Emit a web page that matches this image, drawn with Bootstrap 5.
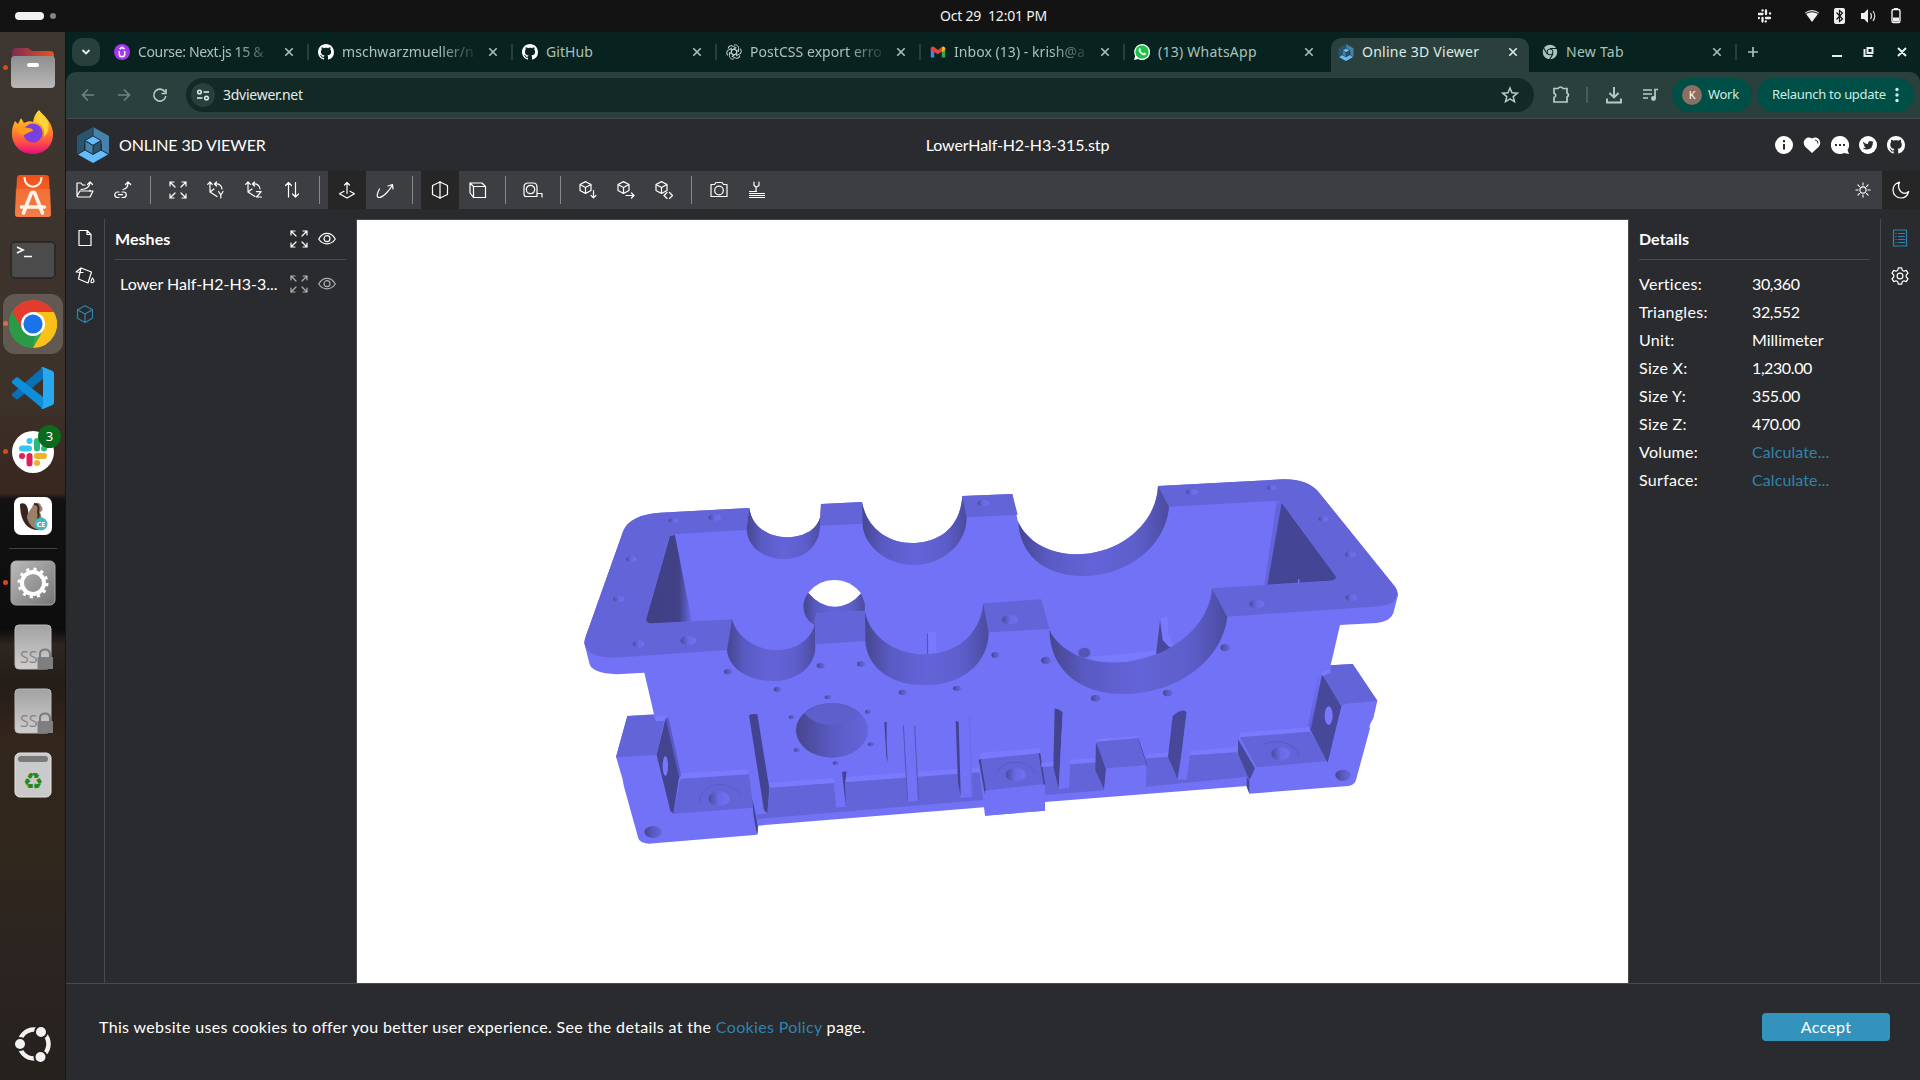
<!DOCTYPE html>
<html lang="en">
<head>
<meta charset="utf-8">
<title>Online 3D Viewer</title>
<meta name="viewport" content="width=device-width, initial-scale=1">
<link href="https://cdn.jsdelivr.net/npm/bootstrap@5.3.0/dist/css/bootstrap.min.css" rel="stylesheet">
<style>
body{--bs-border-color:#4a4a4c;width:1920px;height:1080px;overflow:hidden;background:#131313;font-family:"Noto Sans",sans-serif;color:#fff}
svg{display:block;flex:none}
.ln{fill:none;stroke:currentColor;stroke-width:1.2;stroke-linejoin:round;stroke-linecap:round}
.topbar{height:32px;background:#131313;font-size:14px;padding:0 14px 0 15px}
.topbar .clock{letter-spacing:-.2px;color:#f2f2f2;white-space:pre;padding-left:14px;line-height:30px}
.pill{width:29px;height:8px;border-radius:4px;background:#f2f2f2}
.dot{width:6px;height:6px;border-radius:3px;background:#858585;margin-left:6px}
.dock{width:66px;border-right:1px solid #161414;background:linear-gradient(#3d3631 0,#3d322a 35%,#3a2922 41%,#38281f 44%,#121111 44.6%,#0d0d0d 57%,#2e2621 58.5%,#241c18 62%,#33251c 67%,#30271c 78%,#2c2421 88%,#25211d 100%)}
.slot{width:66px;height:64px;display:flex;align-items:center;justify-content:center;position:relative}
.slot.run::before{content:"";position:absolute;left:3px;top:29px;width:5px;height:5px;border-radius:50%;background:#d84a18}
.slot.cur::after{content:"";position:absolute;left:3px;top:2px;width:60px;height:60px;border-radius:12px;background:rgba(255,255,255,.19)}
.slot.cur svg{z-index:1}
.dsep{width:48px;height:1px;background:#444;margin:0 9px}
.tabs{height:40px;background:#08231f;padding-left:6px;color:#a9c2bc;font-size:14px}
.tsearch{width:28px;height:28px;border-radius:10px;background:#27403b;color:#e3f1ed;margin-right:4px}
.btab{width:204px;height:40px;padding-left:10px;position:relative;letter-spacing:.05px}
.btab::after{content:"";position:absolute;right:-1px;top:12px;width:2px;height:16px;background:#27403b}
.btab .lbl{width:146px;margin-left:8px;white-space:nowrap;line-height:20px}
.btab .tight{letter-spacing:-.35px}
.btab .wide{letter-spacing:.25px}
.btab .fade-out{-webkit-mask-image:linear-gradient(90deg,#000 98px,transparent 138px)}
.btab.on{color:#dcebe7}
.btab.on::before{content:"";position:absolute;left:3px;top:6px;width:198px;height:34px;background:#2a403c;border-radius:10px 10px 0 0}
.btab.on>*{position:relative}
.btab.on::after,.btab.nosep::after{display:none}
.addr{height:47px;background:#2a403c;border-bottom:1px solid #434c4a;color:#b6cdc7;border-radius:10px 10px 0 0}
.bw{background:#08231f}
.omni{width:1348px;height:34px;border-radius:17px;background:#122925;margin-left:14px;color:#e3eeeb;font-size:14px;padding:0 15px 0 5px}
.siteic{width:24px;height:24px;border-radius:12px;background:#27403b}
.url{margin-left:8px;letter-spacing:-.25px;padding-bottom:2px}
.chip{height:34px;border-radius:17px;background:#004f47;color:#c9eee5;font-size:13px;letter-spacing:-.3px}
.ava{width:20px;height:20px;border-radius:10px;background:#8d6e63;color:#fff;font-size:11px;margin-right:6px}
.viewer{background:#2a2b2e;font-family:Lato,sans-serif;font-size:16px}
.vhead{height:52px;padding:0 15px 0 11px}
.vtitle{font-size:16px;letter-spacing:-.12px;width:300px}
.fname{letter-spacing:-.12px;margin-left:53px}
.vtools{height:38px;background:#3d3e42}
.tb{width:38px;height:38px;display:flex;align-items:center;justify-content:center}
.tb.sel{background:#262626}
.tsep{width:1px;height:28px;background:#888;margin:0 8px}
.vmain{height:774px;padding-top:10px}
.strip{width:39px}
.strip div{height:38px;display:flex;align-items:center;justify-content:center}
.pane{width:251px;padding:0 10px}
.ptitle{height:41px;border-bottom:1px solid #4a4a4c;font-weight:700;letter-spacing:.05px}
.canvas3d{width:1273px;background:#fff}
.lnk{color:#2f84ad}
.prow{height:28px;line-height:28px}
.prow span:first-child{width:113px;letter-spacing:.3px}
.prow .num{letter-spacing:-.4px}
.prow .lnk{letter-spacing:.1px}
.cookie{height:97px;border-top:1px solid #4a4a4c;padding:0 30px 10px 33px}
.cookie div{letter-spacing:.345px}
.accept{width:128px;height:28px;border-radius:4px;background:#3393bd;color:#fff;border:0;padding:0;font-size:16px;line-height:28px;letter-spacing:.3px}
</style>
<script src="https://cdn.jsdelivr.net/npm/bootstrap@5.3.0/dist/js/bootstrap.bundle.min.js"></script>
</head>
<body class="d-flex flex-column">
<svg width="0" height="0" class="position-absolute">
<defs>
<symbol id="x" viewBox="0 0 10 10"><path d="M1.300 1.300l7.400 7.400M8.700 1.300L1.300 8.700" stroke="currentColor" stroke-width="1.600" fill="none"/></symbol>
<symbol id="gh" viewBox="0 0 16 16"><path fill="currentColor" d="M8 0C3.58 0 0 3.58 0 8c0 3.54 2.29 6.53 5.47 7.59.4.07.55-.17.55-.38 0-.19-.01-.82-.01-1.49-2.01.37-2.53-.49-2.69-.94-.09-.23-.48-.94-.82-1.13-.28-.15-.68-.52-.01-.53.63-.01 1.08.58 1.23.82.72 1.21 1.87.87 2.33.66.07-.52.28-.87.51-1.07-1.78-.2-3.64-.89-3.64-3.95 0-.87.31-1.59.82-2.15-.08-.2-.36-1.02.08-2.12 0 0 .67-.21 2.2.82.64-.18 1.32-.27 2-.27s1.36.09 2 .27c1.53-1.04 2.2-.82 2.2-.82.44 1.1.16 1.92.08 2.12.51.56.82 1.27.82 2.15 0 3.07-1.87 3.75-3.65 3.95.29.25.54.73.54 1.48 0 1.07-.01 1.93-.01 2.2 0 .21.15.46.55.38A8.01 8.01 0 0 0 16 8c0-4.42-3.58-8-8-8z"/></symbol>
<symbol id="logo" viewBox="0 0 32 36"><path d="M16 0v12L7 17v9L0 27V9z" fill="#2a5470"/><path d="M16 0v12l9 5v9l7 1V9z" fill="#4583ac"/><path d="M16 36L1 27.500l7-4.500 8 4.500 8-4.500 7 4.500z" fill="#63bdfc"/><path d="M16 9l7.500 4.500L16 18l-7.500-4.500z" fill="#63bdfc"/><path d="M8 14l8 4.500V27l-8-4z" fill="#4583ac"/><path d="M24 14l-8 4.500V27l8-4z" fill="#2a5470"/><path d="M16 0v9M8 13.500l8 5 8-5M16 18.500V27M8 13.500V23l8 4.500 8-4.500v-9.500L16 9zM0 27.500L8 23M32 27.500L24 23" fill="none" stroke="#22303a" stroke-width="1"/></symbol>
<symbol id="fit" viewBox="0 0 18 18"><path class="ln" d="M1 5V1h4M1 1l5 5M13 1h4v4M17 1l-5 5M1 13v4h4M1 17l5-5M13 17h4v-4M17 17l-5-5"/></symbol>
<symbol id="eye" viewBox="0 0 18 18"><path class="ln" d="M.7 9C5 1.500 13 1.500 17.300 9 13 15.500 5 15.500.7 9z"/><circle class="ln" cx="9" cy="8.700" r="3"/></symbol>
<symbol id="cube" viewBox="0 0 18 18"><path class="ln" d="M9 .7l7.500 4v8.500L9 17.400l-7.500-4.200V4.700zM1.500 4.700L9 9l7.500-4.300M9 9v8.400"/></symbol>
<symbol id="cubes" viewBox="0 0 18 18"><path class="ln" d="M6.500.6L12 3.500v6L6.500 12.500 1 9.500v-6zM1 3.500l5.500 3L12 3.500M6.500 6.500v6"/></symbol>
<symbol id="axes" viewBox="0 0 18 18"><path class="ln" d="M3 11V1M.7 3.300L3 1l2.300 2.300M3 11l7 4.500M3 11l4-3M9.500 1L7.500 3l2 2M7.700 3C12 2.500 14.500 4 15 8"/></symbol>
<linearGradient id="cy"><stop offset="0" stop-color="#46468f"/><stop offset=".2" stop-color="#5a5ac3"/><stop offset=".5" stop-color="#6464d9"/><stop offset=".8" stop-color="#5d5dca"/><stop offset="1" stop-color="#4b4b9f"/></linearGradient>
<linearGradient id="bo"><stop offset="0" stop-color="#46468f"/><stop offset=".5" stop-color="#5a5ac3"/><stop offset="1" stop-color="#6565dc"/></linearGradient>
<linearGradient id="hl"><stop offset="0" stop-color="#4a4a9d"/><stop offset=".5" stop-color="#6a6ae6"/><stop offset="1" stop-color="#7070f3"/></linearGradient>
<linearGradient id="hr"><stop offset="0" stop-color="#5858bd"/><stop offset="1" stop-color="#7272f7"/></linearGradient>
<linearGradient id="dl"><stop offset="0" stop-color="#404085"/><stop offset=".72" stop-color="#414188"/><stop offset="1" stop-color="#6a6ae6"/></linearGradient>
<linearGradient id="gry" x2="1" y2="1"><stop offset="0" stop-color="#bbb"/><stop offset="1" stop-color="#767676"/></linearGradient>
<linearGradient id="gv" x2="0" y2="1"><stop offset="0" stop-color="#a2a2a2"/><stop offset="1" stop-color="#cfcfcf"/></linearGradient>
<linearGradient id="gd" x2="0" y2="1"><stop offset="0" stop-color="#8f8f8f"/><stop offset="1" stop-color="#b8b8b8"/></linearGradient>
<linearGradient id="ff" x2="0" y2="1"><stop offset="0" stop-color="#ffe03b"/><stop offset=".4" stop-color="#ff9a1f"/><stop offset=".75" stop-color="#ff4a49"/><stop offset="1" stop-color="#e10b82"/></linearGradient>
<linearGradient id="fo"><stop offset="0" stop-color="#7c2b55"/><stop offset="1" stop-color="#e8551f"/></linearGradient>
<linearGradient id="or" x2="0" y2="1"><stop offset="0" stop-color="#f04f17"/><stop offset="1" stop-color="#f5824a"/></linearGradient>
</defs></svg>

<header class="topbar d-flex align-items-center justify-content-between">
  <div class="d-flex align-items-center" style="width:200px"><div class="pill"></div><div class="dot"></div></div>
  <div class="clock">Oct 29  12:01 PM</div>
  <svg width="148" height="18" viewBox="1758 7 148 18" fill="#f0f0f0"><g fill="none" stroke="#f0f0f0" stroke-width="2.300" stroke-linecap="round"><path d="M1758.500 14h4M1762.500 10.500h.1M1766 10.500v3.500M1770 13.500h.1M1766 18h4M1765.700 21.500h.1M1762.500 18v3.500M1758.800 18h.1"/></g>
  <path d="M1805 12.500Q1812 7.500 1819 12.500L1812 22z"/><path d="M1806 13.500q6-3.500 12 0" stroke="#131313" fill="none" stroke-width="1"/>
  <rect x="1834" y="8" width="11" height="16" rx="2"/><path d="M1836.500 12.500l6 6.500-3 2.500v-11l3 2.500-6 6.500" stroke="#131313" fill="none" stroke-width="1.200"/>
  <path d="M1861 13h3l4-4v14l-4-4h-3z"/><path d="M1870.500 13q2 3 0 6M1873 11q3.500 5 0 10" stroke="#ddd" fill="none" stroke-width="1.200"/>
  <path d="M1892 11q0-1.500 1.500-1.500h5q1.500 0 1.500 1.500v10q0 1.500-1.500 1.500h-5q-1.500 0-1.500-1.500z" fill="none" stroke="#f0f0f0" stroke-width="1.400"/><path d="M1894 8h4v2h-4zM1893 17.500h6v4h-6z"/></svg>
</header>

<div class="d-flex flex-grow-1">
<nav class="dock d-flex flex-column pt-1">
  <div class="slot run"><svg width="46" height="42" viewBox="0 0 46 42"><path d="M2 5q0-4 4-4h12l4 3h18q4 0 4 4v8H2z" fill="url(#fo)"/><rect x="1" y="9" width="44" height="32" rx="4" fill="url(#gd)"/><rect x="17" y="16" width="12" height="4" rx="2" fill="#fff"/></svg></div>
  <div class="slot"><svg width="44" height="46" viewBox="0 0 44 46"><path d="M28 1c3 5 12 9 14 22C43 36 34 45 22 45S0 36 1 23c0-5 2-8 3-11l3 3 3-6 3 5c4-2 7-2 9-1 1-6 3-9 6-12z" fill="url(#ff)"/><circle cx="22" cy="24" r="9.500" fill="#7a3fe0"/><path d="M6 19c5-2 9 0 11 0 3 0 5 1 5 3-5 1-6 3-9 4-5-1-6-4-7-7z" fill="#ff9a1f"/><path d="M24 13c8 1 10 8 9 15 6-5 7-16-3-24-3 3-6 5-6 9z" fill="#ffd43b"/></svg></div>
  <div class="slot"><svg width="38" height="44" viewBox="0 0 38 44"><path d="M3 4q0-3 3-3h26q3 0 3 3l2 36q0 3-3 3H4q-3 0-3-3z" fill="url(#or)"/><path d="M1.800 15h34.400L37 40q0 3-3 3H4q-3 0-3-3z" fill="#f47a45" opacity=".55"/><path d="M10.500 3c0 13 17 13 17 0" fill="none" stroke="#fff3ea" stroke-width="2"/><path d="M9.500 39L17.500 18.500h3L28.500 39M7.500 33h23" fill="none" stroke="#fff3ea" stroke-width="3.600" stroke-linecap="round" stroke-linejoin="bevel"/></svg></div>
  <div class="slot"><svg width="46" height="38" viewBox="0 0 46 38"><rect x="1" y="1" width="44" height="36" rx="4" fill="#4b4b4b" stroke="#252525" stroke-width="1.500"/><path d="M7 6l6 3-6 3M14 15.500h8" stroke="#fff" stroke-width="1.700" fill="none"/></svg></div>
  <div class="slot run cur"><svg width="48" height="48" viewBox="0 0 48 48"><circle cx="24" cy="24" r="24" fill="#34a853"/><path d="M3.200 12A24 24 0 0 1 44.800 12H24L13.600 30z" fill="#e33b2e"/><path d="M44.800 12A24 24 0 0 1 24 48L34.400 30 34 12z" fill="#fbc116"/><path d="M3.200 12L13.600 30l12 5L24 48A24 24 0 0 1 3.200 12z" fill="#2a9a48"/><path d="M24 12h12v12z" fill="#fbc116"/><circle cx="24" cy="24" r="12" fill="#fff"/><circle cx="24" cy="24" r="9.600" fill="#1a73e8"/></svg></div>
  <div class="slot"><svg width="44" height="44" viewBox="0 0 44 44"><path d="M32 1L1 28l0 2 4 3q1 .5 2 0L32 13z" fill="#0a6fb5"/><path d="M1 15l4-3.500q1-.5 2 0L32 31v12L1 17z" fill="#0e8fdc"/><path d="M32 1l9.500 4Q43 6 43 7.500v29q0 1.500-1.500 2.500L32 43q-1 0-2-1 2 0 2-3V5q0-3-2-3 1-1 2-1z" fill="#27a9f2"/></svg></div>
  <div class="slot run"><svg width="50" height="54" viewBox="0 0 50 54" overflow="visible"><circle cx="25" cy="27" r="21" fill="#fff"/><g stroke-width="6" stroke-linecap="round" fill="none"><path d="M14 23.500h7M21.500 16h.1" stroke="#36c5f0"/><path d="M29 16v7.500M36 23.500h.1" stroke="#2eb67d"/><path d="M29 31h7M29 38h.1" stroke="#ecb22e"/><path d="M21.500 31v7.500M14 31h.1" stroke="#e01e5a"/></g><circle cx="41.500" cy="11.500" r="11.500" fill="#0a6b1c"/><text x="41.500" y="16" font-size="13" text-anchor="middle" fill="#fff">3</text></svg></div>
  <div class="slot"><svg width="40" height="40" viewBox="0 0 40 40"><rect x="1" y="1" width="38" height="38" rx="7" fill="#fff"/><path d="M7 8c6-3 9 4 8 11 0 6 3 10 8 12l4 3C14 35 7 25 7 8z" fill="#382520"/><path d="M14 22c0-6 5-9 6-13 3-4 8-2 8 1 3 2 1 6-1 6 2 5 3 12-1 17-5 1-10-4-12-11z" fill="#9b7f69"/><path d="M21 8c5 0 5 4 4 8 2 5-1 10-2 12" stroke="#382520" stroke-width="2" fill="none"/><circle cx="28" cy="28" r="6.500" fill="#46b5bd"/><text x="28" y="31" font-size="7" font-weight="700" text-anchor="middle" fill="#fff">CE</text></svg></div>
  <div class="dsep"></div>
  <div class="slot run" style="margin-top:2px"><svg width="46" height="46" viewBox="0 0 46 46"><rect x="1" y="1" width="44" height="44" rx="5" fill="url(#gry)" stroke="#aaa"/><circle cx="23" cy="23" r="11" fill="none" stroke="#fff" stroke-width="4"/><circle cx="23" cy="23" r="13.700" fill="none" stroke="#fff" stroke-width="3.500" stroke-dasharray="3.100 4.070"/></svg></div>
  <div class="slot"><svg width="40" height="46" viewBox="0 0 40 46"><rect x="2" y="1" width="36" height="44" rx="4" fill="url(#gv)" stroke="#bbb"/><text x="7" y="39" font-size="16" fill="#858585" font-family="Open Sans,sans-serif">SS</text><path d="M27 34v-4q0-4.500 5-4.500t5 4.500v4" fill="none" stroke="#7c7c7c" stroke-width="2"/><path d="M24.500 33H40v12H24.500z" fill="#7f7f7f"/></svg></div>
  <div class="slot"><svg width="40" height="46" viewBox="0 0 40 46"><rect x="2" y="1" width="36" height="44" rx="4" fill="url(#gv)" stroke="#bbb"/><text x="7" y="39" font-size="16" fill="#858585" font-family="Open Sans,sans-serif">SS</text><path d="M27 34v-4q0-4.500 5-4.500t5 4.500v4" fill="none" stroke="#7c7c7c" stroke-width="2"/><path d="M24.500 33H40v12H24.500z" fill="#7f7f7f"/></svg></div>
  <div class="slot"><svg width="38" height="46" viewBox="0 0 38 46"><rect x="1" y="1" width="36" height="44" rx="5" fill="#cacaca" stroke="#e5e5e5"/><rect x="4" y="4" width="30" height="6" rx="3" fill="#7a7a7a"/><text x="19" y="37" font-size="23" text-anchor="middle" fill="#26891c" font-family="DejaVu Sans,sans-serif">♻</text></svg></div>
  <div class="slot mt-auto mb-1"><svg width="38" height="38" viewBox="0 0 38 38"><circle cx="20" cy="19" r="14.500" fill="none" stroke="#f2f2f2" stroke-width="4.500"/><g fill="#f2f2f2" stroke="#25211d" stroke-width="2"><circle cx="6" cy="19" r="6"/><circle cx="27" cy="7" r="6"/><circle cx="26.500" cy="32" r="6"/></g></svg></div>
</nav>

<main class="flex-grow-1 d-flex flex-column bw">
  <div class="tabs d-flex align-items-center">
    <div class="tsearch d-flex align-items-center justify-content-center"><svg width="10" height="8" viewBox="0 0 10 8"><path d="M1.500 2L5 5.500 8.500 2" stroke="currentColor" stroke-width="1.800" fill="none"/></svg></div>
    <div class="btab d-flex align-items-center"><svg width="16" height="16" viewBox="0 0 16 16"><circle cx="8" cy="8" r="8" fill="#a435f0"/><path d="M5.300 7v3.200q0 2.500 2.700 2.500t2.700-2.500V7M5.500 5L8 3.300 10.500 5" fill="none" stroke="#fff" stroke-width="1.600"/></svg><div class="lbl fade-out tight">Course: Next.js 15 &amp;</div><svg width="10" height="10"><use href="#x"/></svg></div>
    <div class="btab d-flex align-items-center"><svg width="16" height="16" color="#fff"><use href="#gh"/></svg><div class="lbl fade-out">mschwarzmueller/n</div><svg width="10" height="10"><use href="#x"/></svg></div>
    <div class="btab d-flex align-items-center"><svg width="16" height="16" color="#fff"><use href="#gh"/></svg><div class="lbl">GitHub</div><svg width="10" height="10"><use href="#x"/></svg></div>
    <div class="btab d-flex align-items-center"><svg width="16" height="16" viewBox="0 0 16 16"><g fill="none" stroke="#c8d4d1" stroke-width="1"><path id="pt" d="M8 1.200c2-1 4.800.5 4.500 3.300v3L8 5 5 6.700"/><use href="#pt" transform="rotate(60 8 8)"/><use href="#pt" transform="rotate(120 8 8)"/><use href="#pt" transform="rotate(180 8 8)"/><use href="#pt" transform="rotate(240 8 8)"/><use href="#pt" transform="rotate(300 8 8)"/></g></svg><div class="lbl fade-out">PostCSS export erro</div><svg width="10" height="10"><use href="#x"/></svg></div>
    <div class="btab d-flex align-items-center"><svg width="16" height="16" viewBox="0 0 16 16"><path d="M.8 4v9.500h3.400V6z" fill="#4285f4"/><path d="M15.200 4v9.500h-3.400V6z" fill="#34a853"/><path d="M.8 6.200V4Q2 1.500 4.200 3L8 6l3.800-3v4.500L8 10.300z" fill="#ea4335"/><path d="M11.800 3q2.400-1.500 3.400 1v2l-3.400 2.300z" fill="#fbbc04"/></svg><div class="lbl fade-out">Inbox (13) - krish@a</div><svg width="10" height="10"><use href="#x"/></svg></div>
    <div class="btab nosep d-flex align-items-center"><svg width="16" height="16" viewBox="0 0 16 16"><path d="M0 16l1.200-4A8 8 0 1 1 4.200 15z" fill="#fff"/><circle cx="8" cy="8" r="6.700" fill="#1fc14b"/><path d="M5 4.500q1-1 1.500.2l.4 1-.6.900Q7.300 8.700 9.300 9.500l.9-.9 1.500.7q.6.400-.2 1.400-1 1-2.800.3Q5.500 9.700 4.600 6.500q-.2-1.200.4-2z" fill="#fff"/></svg><div class="lbl wide">(13) WhatsApp</div><svg width="10" height="10"><use href="#x"/></svg></div>
    <div class="btab on d-flex align-items-center"><svg width="16" height="17"><use href="#logo"/></svg><div class="lbl wide">Online 3D Viewer</div><svg width="10" height="10"><use href="#x"/></svg></div>
    <div class="btab d-flex align-items-center"><svg width="16" height="16" viewBox="0 0 16 16"><circle cx="8" cy="8" r="5.300" fill="none" stroke="#a9c2bc" stroke-width="4"/><path d="M8 4.500h7.500M5 9.800L1.200 3.300M11 9.800L7.300 16" stroke="#08231f" stroke-width="1.100"/><circle cx="8" cy="8" r="2.400" fill="#a9c2bc"/></svg><div class="lbl wide">New Tab</div><svg width="10" height="10"><use href="#x"/></svg></div>
    <svg class="ms-auto" width="182" height="20" viewBox="1738 42 182 20" stroke="currentColor" fill="none" stroke-width="1.700"><path d="M1753 47v10M1748 52h10"/><g stroke="#e4efec" stroke-width="2"><path d="M1832 56h10M1867.500 48h5v5h-5zM1864.500 49v7h8M1898 48l8 8M1906 48l-8 8"/></g></svg>
  </div>
  <div class="addr d-flex align-items-center">
    <svg style="margin-left:14px" width="92" height="20" viewBox="80 85 92 20" fill="none" stroke="currentColor" stroke-width="1.600"><path d="M94 95H83M88 89.500L82.500 95l5.500 5.500M118 95h11M124 89.500l5.500 5.500-5.500 5.500" stroke="#6d8580"/><path d="M165 92a6 6 0 1 0 .8 4M166 89v4.500h-4.500"/></svg>
    <div class="omni d-flex align-items-center"><div class="siteic d-flex align-items-center justify-content-center"><svg width="14" height="14" viewBox="0 0 14 14" fill="none" stroke="currentColor" stroke-width="1.500"><circle cx="3.500" cy="4" r="1.800"/><circle cx="10.500" cy="10" r="1.800"/><path d="M7.500 4H13M1 10h5.500"/></svg></div><span class="url">3dviewer.net</span>
      <svg class="ms-auto" width="18" height="18" viewBox="0 0 18 18"><path d="M9 2l2 4.800 5.200.4-4 3.400 1.300 5L9 12.900l-4.500 2.700 1.300-5-4-3.400 5.200-.4z" fill="none" stroke="#b6cdc7" stroke-width="1.500"/></svg></div>
    <svg width="138" height="24" viewBox="1534 83 138 24" fill="none" stroke="currentColor" stroke-width="1.700"><path d="M1554 88.500h4q2.500-3 5 0h4v4.500q3 2 0 4v5h-13v-4.500q3.500-2 0-4.500z"/><path d="M1587 87v16" stroke="#4a625d"/><path d="M1614 87v10M1609.500 93l4.500 4.500 4.500-4.500M1607 98.500v4h14v-4" stroke-width="1.900"/><path d="M1643 90h9M1643 94h9M1643 98h5M1655 99v-9.500h3"/><circle cx="1653.500" cy="98.500" r="1.600" fill="currentColor"/></svg>
    <div class="chip d-flex align-items-center" style="width:80px;padding-left:10px"><div class="ava d-flex align-items-center justify-content-center">K</div>Work</div>
    <div class="chip d-flex align-items-center" style="width:157px;margin-left:5px;padding-left:15px"><span>Relaunch to update</span><svg class="ms-auto" width="4" height="16" viewBox="0 0 4 16" style="margin-right:15px" fill="currentColor"><circle cx="2" cy="2.500" r="1.700"/><circle cx="2" cy="8" r="1.700"/><circle cx="2" cy="13.500" r="1.700"/></svg></div>
  </div>

  <section class="viewer flex-grow-1 d-flex flex-column">
    <div class="vhead d-flex align-items-center justify-content-between">
      <div class="vtitle d-flex align-items-center"><svg width="32" height="36" style="margin-right:10px"><use href="#logo"/></svg>ONLINE 3D VIEWER</div>
      <div class="fname">LowerHalf-H2-H3-315.stp</div>
      <div class="d-flex justify-content-end" style="width:300px;gap:10px">
        <svg width="18" height="18" viewBox="0 0 18 18"><circle cx="9" cy="9" r="9" fill="#fff"/><path d="M9 4v2.200M9 8v5.500" stroke="#2a2b2e" stroke-width="2"/></svg>
        <svg width="18" height="18" viewBox="0 0 18 18"><path d="M9 17L2 10.500C-1.500 6 3-1 9 2.500 15-1 19.500 6 16 10.500z" fill="#fff"/><path d="M12 4q3 0 3 3.500" stroke="#2a2b2e" fill="none"/></svg>
        <svg width="18" height="18" viewBox="0 0 18 18"><path d="M9 0a9 9 0 0 1 7.500 14L18 18l-5-1A9 9 0 1 1 9 0z" fill="#fff"/><path d="M4 9h2M8 9h2M12 9h2" stroke="#2a2b2e" stroke-width="2"/></svg>
        <svg width="18" height="18" viewBox="0 0 18 18"><circle cx="9" cy="9" r="9" fill="#fff"/><path d="M4 5.500q2 2.500 5 2.500 0-3 2.500-3 1.200 0 1.800.7l1.500-.4-1 1.500Q14 13 8 13.500q-2.500 0-4.200-1.200 2 0 3-1-1.800-.6-2-2h1Q4 8 4 5.500z" fill="#2a2b2e"/></svg>
        <svg width="18" height="18" color="#fff"><use href="#gh"/></svg>
      </div>
    </div>
    <div class="vtools d-flex align-items-center">
      <div class="tb"><svg width="18" height="18" viewBox="0 0 18 18"><path class="ln" d="M1 15V2h4l1.500 2H9M14 9v1.500M1 15l3-5h13l-3 6H2zM5 8.500c5 0 8.500-2 9-7M11.500 3.500L14 1l2.500 2.500"/></svg></div>
      <div class="tb"><svg width="18" height="18" viewBox="0 0 18 18"><path class="ln" d="M5 11H3.500a2.700 2.700 0 0 0 0 5.500H5M8 11h1.500a2.700 2.700 0 0 1 0 5.500H8M4.500 13.700h4M9 8.500c3.500-.5 5-3 5-7M11.500 3.500L14 1l2.700 2.500"/></svg></div>
      <div class="tsep"></div>
      <div class="tb"><svg width="18" height="18"><use href="#fit"/></svg></div>
      <div class="tb"><svg width="18" height="18" viewBox="0 0 18 18"><use href="#axes"/><path class="ln" d="M11.500 10.500l2.300 3.300 2.300-3.300M13.800 13.800V17"/></svg></div>
      <div class="tb"><svg width="18" height="18" viewBox="0 0 18 18"><use href="#axes"/><path class="ln" d="M11.500 10.700h4.700L11.500 16h5"/></svg></div>
      <div class="tb"><svg width="18" height="18" viewBox="0 0 18 18"><path class="ln" d="M5.500 16V1.500M2.500 4.500l3-3 3 3M12.500 1.500V16M9.500 13l3 3 3-3"/></svg></div>
      <div class="tsep"></div>
      <div class="tb sel"><svg width="18" height="18" viewBox="0 0 18 18"><path class="ln" d="M9 12.500V1.500M6.500 4L9 1.500 11.500 4M6 10.300L1.500 12.700 9 17l7.500-4.300L12 10.300"/></svg></div>
      <div class="tb"><svg width="18" height="18" viewBox="0 0 18 18"><path class="ln" d="M3.500 8c-3 5-3 8.500-.5 8.500C7 16.500 13 10 16.500 4M12 5l4.500-1.500.5 4.500"/></svg></div>
      <div class="tsep"></div>
      <div class="tb sel"><svg width="18" height="18" viewBox="0 0 18 18"><path class="ln" d="M9 1l7.500 3.500v9L9 17l-7.500-3.500v-9zM9 .5v17"/></svg></div>
      <div class="tb"><svg width="18" height="18" viewBox="0 0 18 18"><path class="ln" d="M4.500 5.500h12v11h-12zM4.500 5.500l-3.500-3.500v10l3.500 4.500M1 2h12l3.500 3.500"/></svg></div>
      <div class="tsep"></div>
      <div class="tb"><svg width="20" height="18" viewBox="0 0 20 18"><path class="ln" d="M3 15.500Q1 15.500 1 13V6q0-4 4-4h5q4 0 4 4v6.500h5V16M3 15.500h11V12"/><circle class="ln" cx="7.500" cy="8.500" r="4.200"/></svg></div>
      <div class="tsep"></div>
      <div class="tb"><svg width="18" height="18" viewBox="0 0 18 18"><use href="#cubes"/><path class="ln" d="M14.500 9.500v7M12 14.300l2.500 2.500 2.500-2.500"/></svg></div>
      <div class="tb"><svg width="18" height="18" viewBox="0 0 18 18"><use href="#cubes"/><path class="ln" d="M9 14.500h8M14.500 12l2.500 2.500-2.500 2.500"/></svg></div>
      <div class="tb"><svg width="18" height="18" viewBox="0 0 18 18"><use href="#cubes"/><path class="ln" d="M12 11.500l-3 3 3 3M14.500 11.500l3 3-3 3"/></svg></div>
      <div class="tsep"></div>
      <div class="tb"><svg width="18" height="18" viewBox="0 0 18 18"><path class="ln" d="M1 3.500h3.500L6 1.500h6l1.500 2H17v12H1z"/><circle class="ln" cx="9" cy="9.500" r="4.300"/></svg></div>
      <div class="tb"><svg width="18" height="18" viewBox="0 0 18 18"><path class="ln" d="M6 1v3.500l2 1.500v4.500M11 1v3.500L8.500 6M1.500 10.500h7M1.500 12.500h15M1.500 14.500h15M1.500 16.500h15" stroke-linecap="butt"/></svg></div>
      <div class="tb ms-auto"><svg width="16" height="16" viewBox="0 0 18 18"><circle class="ln" cx="9" cy="9" r="3.500"/><path class="ln" d="M9 1v2.500M9 14.500V17M1 9h2.500M14.500 9H17M3.300 3.300l1.800 1.800M12.900 12.900l1.800 1.800M3.300 14.700l1.800-1.800M12.900 5.100l1.800-1.800"/></svg></div>
      <div class="tb sel"><svg width="18" height="18" viewBox="0 0 18 18"><path class="ln" stroke-width="1.400" d="M7 1.200C3 2.500 1 5.500 1 9c0 5 4 8 8 8 3.500 0 6.500-2 7.700-6.500-3 2.500-6 2-8 0C6.500 8 6 4.500 7.500 1.200z"/></svg></div>
    </div>
    <div class="vmain d-flex">
      <div class="strip border-end">
        <div><svg width="18" height="18" viewBox="0 0 18 18"><path class="ln" d="M3 1.500h8l4 4v11H3zM11 1.500v4h4"/></svg></div>
        <div><svg width="20" height="18" viewBox="0 0 20 18"><path class="ln" d="M6 1l10.500 4-3.500 11-9.500-4zM6 1L1 5l7 .5M17.500 11q3 4 0 4.500t0-4.500z"/></svg></div>
        <div class="lnk"><svg width="18" height="18"><use href="#cube"/></svg></div>
      </div>
      <div class="pane">
        <div class="ptitle d-flex align-items-center"><span class="me-auto">Meshes</span><svg width="18" height="18"><use href="#fit"/></svg><svg width="18" height="18" style="margin:0 10px"><use href="#eye"/></svg></div>
        <div class="d-flex align-items-center" style="height:28px;margin-top:10px;padding-left:5px"><span class="me-auto">Lower Half-H2-H3-3...</span><svg width="18" height="18" color="#b0b0b0"><use href="#fit"/></svg><svg width="18" height="18" style="margin:0 10px" color="#b0b0b0"><use href="#eye"/></svg></div>
      </div>
      <div class="canvas3d border-start border-top border-end">
<svg width="1271" height="763" viewBox="357 220 1271 763">
<g transform="translate(560 460) scale(.333333)">
<path fill="#7272f7" d="M300 158L568 144C575 200 625 232 682 232 735 232 778 205 783 160V132L906 126C920 205 985 249 1055 249 1130 249 1200 210 1207 108L1357 102 1373 182C1400 245 1470 283 1550 283 1680 283 1790 190 1794 78L2170 58Q2240 57 2275 95L2505 380Q2515 392 2514 405L2500 460Q2490 485 2450 489L2340 495 2312 616 2378 612 2452 722 2440 775Q2425 800 2430 805L2388 960Q2384 975 2365 978L2068 1001 2060 978 1455 1026V1052L1275 1067 1272 1042 595 1097 592 1124 265 1151Q240 1150 235 1135L192 980 187 955 168 890 202 768 282 763 253 638 170 643Q95 640 88 610L73 550Q73 540 78 527L190 212Q210 165 300 158z"/>
<g fill="#6464d9">
<path d="M300 158L568 144 560 210 360 221Q330 223 326 238L258 478Q258 491 285 490L517 478 501 570 160 593Q80 592 73 550 73 540 78 527L190 212Q210 165 300 158z"/>
<path d="M783 132L906 126 908 191 779 197zM1207 108L1357 102 1373 164 1220 172z"/>
<path d="M1794 78L2170 58Q2240 57 2275 95L2505 380Q2520 405 2500 425 2485 437 2440 440L2002 470 1956 385 2310 363Q2330 360 2328 350L2170 132Q2160 122 2140 123L1827 140z"/>
</g>
<path fill="url(#cy)" d="M568 144C575 200 625 232 682 232 735 232 778 205 783 160V132L780 197C780 250 740 297 673 297 610 297 562 260 560 208z"/>
<path fill="url(#cy)" d="M906 126C920 205 985 249 1055 249 1130 249 1200 210 1207 108L1220 173C1220 250 1150 315 1060 315 975 315 908 250 908 192z"/>
<path fill="url(#cy)" d="M1373 182C1400 245 1470 283 1550 283 1680 283 1790 190 1794 78L1827 140C1820 250 1710 348 1570 348 1450 348 1378 280 1375 185z"/>
<path fill="url(#dl)" d="M330 228L345 225 395 484 280 490Q255 490 259 476z"/>
<path fill="#5858bd" d="M2150 126l15 4-43 244-9 0z" opacity=".5"/><path fill="#454595" d="M2165 128L2328 350Q2330 360 2310 362L2122 374z"/>
<path fill="url(#cy)" d="M745 398C722 425 725 475 765 495L768 460 915 452 914 430 903 400z"/>
<path fill="#fff" d="M745 398Q775 360 823 360T903 400Q870 440 825 440T745 398z"/>
<path fill="#7a7afe" d="M1590 590L1790 572V582L1700 606 1600 602z"/><ellipse cx="1573" cy="578" rx="18" ry="15" fill="#5555b5"/>
<path fill="#7a7afe" d="M1803 474q12-8 22-2v52l15 32-30 20z"/><path fill="#48489b" d="M1800 482L1788 584 1815 583 1842 560 1828 562 1808 540z"/>
<path fill="#7979fd" d="M1103 515l25 0v60l-20 8z"/><path fill="#5555b5" d="M1101 520h3v63h-3z"/>
<path fill="#6464d9" d="M768 460L915 452 916 543 768 553zM1270 430L1444 418 1468 507 1286 517z"/>
<path fill="url(#cy)" d="M516 478C530 530 585 570 650 570 710 570 758 535 766 485V560C766 620 710 663 640 663 565 663 505 625 501 570z"/>
<path fill="url(#cy)" d="M915 455C930 530 1005 583 1095 583 1190 583 1262 520 1270 430L1286 517C1286 610 1205 676 1095 676 990 676 920 620 916 543z"/>
<path fill="url(#cy)" d="M1468 510C1500 575 1580 608 1660 608 1820 608 1950 500 1956 385L2002 470C1985 610 1840 702 1690 702 1560 702 1470 630 1468 510z"/>
<ellipse cx="816" cy="811" rx="108" ry="82" fill="url(#bo)"/><path fill="#5e5ecc" d="M733 759Q770 729 816 729T899 759Q870 795 816 795T733 759z"/>
<!-- left foot -->
<path fill="#6464d9" d="M202 768L280 765 288 783 312 783 290 885 168 892z"/>
<path fill="#7a7afe" d="M282 768l38-2-6 16-26 1zM360 940l205-12v14l-205 15z"/>
<path fill="#434390" d="M317 775L328 790 358 945 340 1061 331 1052 290 885z"/>
<path fill="#5a5ac4" d="M317 775L326 775 363 945 358 955z"/>
<path fill="#6464d9" d="M362 957L567 943 580 1043 340 1061z"/>
<path fill="#434390" d="M577 1018L583 1044 593 1098V1122L588 1110 580 1060z"/>
<!-- rail -->
<path fill="#7a7afe" d="M628 968L1255 922 1262 878 1440 865V880L1262 896V938L630 985z"/>
<path fill="#6464d9" d="M630 983L1258 937 1270 1020 590 1077 590 1064 622 1060z"/>
<path fill="#434390" d="M567 766Q575 760 592 763L628 985 622 1060 612 1050z"/>
<path fill="#7272f7" d="M818 925L848 936 857 1040 828 1043zM1030 795H1065L1075 1022 1043 1025zM1197 780L1228 770 1238 1010 1202 1014z"/>
<path fill="#434390" d="M846 936L860 934 855 970 858 1040zM1187 782l9 4 6 222-8-38zM973 786h7l0 60 3 62-4-20z"/>
<path fill="none" stroke="#5555b5" stroke-width="3" d="M1030 795l13 228M1064 797l11 222"/><path fill="none" stroke="#6666de" stroke-width="2" d="M1228 772l8 236"/>
<!-- centre foot -->
<path fill="#434390" d="M1256 900l8-4 15 94-5 10z"/>
<path fill="#6464d9" d="M1262 898L1438 880 1454 972 1278 992zM1443 920L1627 906 1640 990 1457 1005z"/>
<path fill="#7272f7" d="M1275 992L1455 974V1052L1275 1067z"/>
<path fill="#434390" d="M1436 880h5l14 92-4 2zM1484 745Q1500 748 1508 757L1500 920 1496 986 1480 920z"/>
<path fill="#7272f7" d="M1508 757L1531 912 1527 984 1496 988 1500 910z"/>
<path fill="#7a7afe" d="M1608 838l123-11v8l-123 11zM1760 882l270-20 10-44 210-16v12l-210 18-10 44-270 20zM1530 900l78-6v12l-78 6zM1444 908l36-3v14l-36 2z"/>
<path fill="#6464d9" d="M1758 895L2030 877 2066 950 1757 980z"/>
<path fill="#48489a" d="M1608 846L1640 925 1632 988 1606 930zM1732 833l4 4 26 78-2 6z"/>
<path fill="#6464d9" d="M1610 845L1733 835 1760 915 1637 928z"/><path fill="#7272f7" d="M1638 928Q1640 924 1648 924L1760 916 1757 980 1632 990z"/>
<path fill="#48489a" d="M1838 768Q1870 742 1880 757L1865 880 1853 958 1824 890z"/>
<path fill="#7272f7" d="M1880 757L1891 880 1880 958 1853 960 1865 880z"/>
<!-- right foot -->
<path fill="#6464d9" d="M2040 832L2250 815 2303 903 2090 922z"/>
<path fill="#48489a" d="M2034 838L2085 925 2068 960 2034 882zM2060 950l8 12v38l-8-20zM2286 643L2345 735 2303 908 2250 808z"/>
<path fill="#6464d9" d="M2312 632V616L2378 612 2452 722 2360 731Q2348 732 2344 740L2290 648z"/>
<path fill="#7a7afe" d="M2280 640l30-14 2 12-22 10z"/>
<path fill="url(#hr)" d="M2254 806l32-163-12 4-30 150z" opacity=".6"/>
<g fill="#7878ff"><ellipse cx="316" cy="918" rx="8" ry="30"/><ellipse cx="2306" cy="767" rx="12" ry="28"/></g>
<g fill="none" stroke="#5555b8" stroke-width="2"><path d="M418 1027c0-60 95-72 122-22M1312 940c10-45 95-45 112 0M2110 855c35-20 95-10 107 32"/></g>
<g fill="url(#hl)"><ellipse cx="477" cy="1016" rx="32" ry="22"/><ellipse cx="1367" cy="944" rx="30" ry="21"/><ellipse cx="2162" cy="881" rx="28" ry="20"/></g>
<g fill="url(#bo)"><ellipse cx="279" cy="1116" rx="26" ry="18"/><ellipse cx="2349" cy="946" rx="23" ry="17"/></g>
<g fill="url(#hl)"><ellipse cx="341" cy="181" rx="15" ry="8"/><ellipse cx="464" cy="173" rx="19" ry="10"/><ellipse cx="214" cy="297" rx="16" ry="9"/><ellipse cx="176" cy="417" rx="17" ry="10"/><ellipse cx="236" cy="552" rx="18" ry="11"/><ellipse cx="385" cy="542" rx="24" ry="14"/><ellipse cx="1270" cy="129" rx="18" ry="10"/><ellipse cx="1350" cy="479" rx="24" ry="14"/><ellipse cx="1896" cy="96" rx="18" ry="10"/><ellipse cx="2135" cy="83" rx="14" ry="8"/><ellipse cx="2290" cy="177" rx="15" ry="9"/><ellipse cx="2371" cy="283" rx="16" ry="10"/><ellipse cx="2374" cy="413" rx="17" ry="11"/><ellipse cx="2091" cy="432" rx="23" ry="13"/></g>
<g fill="url(#bo)"><ellipse cx="504" cy="635" rx="12" ry="8"/><ellipse cx="652" cy="688" rx="11" ry="8"/><ellipse cx="782" cy="617" rx="12" ry="8"/><ellipse cx="903" cy="612" rx="12" ry="8"/><ellipse cx="1028" cy="697" rx="12" ry="8"/><ellipse cx="1191" cy="685" rx="12" ry="8"/><ellipse cx="1306" cy="585" rx="12" ry="9"/><ellipse cx="1458" cy="601" rx="15" ry="11"/><ellipse cx="1607" cy="715" rx="14" ry="10"/><ellipse cx="1823" cy="699" rx="14" ry="10"/><ellipse cx="1995" cy="563" rx="14" ry="11"/><ellipse cx="804" cy="712" rx="10" ry="6"/><ellipse cx="695" cy="771" rx="9" ry="6"/><ellipse cx="924" cy="755" rx="9" ry="6"/><ellipse cx="933" cy="853" rx="9" ry="6"/><ellipse cx="710" cy="870" rx="9" ry="6"/><ellipse cx="827" cy="909" rx="9" ry="6"/></g>
<path fill="#7a7afe" d="M2214 358h4v12h-4z"/>
</g></svg>
      </div>
      <div class="pane">
        <div class="ptitle d-flex align-items-center">Details</div>
        <div style="padding-top:10px">
        <div class="prow d-flex"><span>Vertices:</span><span class="num">30,360</span></div>
        <div class="prow d-flex"><span>Triangles:</span><span class="num">32,552</span></div>
        <div class="prow d-flex"><span>Unit:</span><span>Millimeter</span></div>
        <div class="prow d-flex"><span>Size X:</span><span class="num">1,230.00</span></div>
        <div class="prow d-flex"><span>Size Y:</span><span class="num">355.00</span></div>
        <div class="prow d-flex"><span>Size Z:</span><span class="num">470.00</span></div>
        <div class="prow d-flex"><span>Volume:</span><span class="lnk">Calculate...</span></div>
        <div class="prow d-flex"><span>Surface:</span><span class="lnk">Calculate...</span></div>
        </div>
      </div>
      <div class="strip border-start" style="width:40px;padding-right:1px">
        <div class="lnk"><svg width="18" height="18" viewBox="0 0 18 18"><path class="ln" d="M2.500 1h13v16h-13zM7.500 4.500h6M7.500 7.500h6M7.500 10.500h6M7.500 13.500h6M4.800 4.500h.4M4.800 7.500h.4M4.800 10.500h.4M4.800 13.500h.4"/></svg></div>
        <div><svg width="18" height="18" viewBox="0 0 18 18"><circle class="ln" cx="9" cy="9" r="2.900"/><path class="ln" d="M7.300.8h3.400l.5 2.400 1.800 1 2.300-.8L17 6.300 15.200 8v2l1.800 1.700-1.700 2.900-2.300-.8-1.800 1-.5 2.400H7.300l-.5-2.400-1.800-1-2.300.8L1 11.700 2.800 10V8L1 6.300l1.700-2.900 2.300.8 1.800-1z"/></svg></div>
      </div>
    </div>
    <div class="cookie d-flex align-items-center justify-content-between">
      <div>This website uses cookies to offer you better user experience. See the details at the <span class="lnk">Cookies Policy</span> page.</div>
      <button class="accept">Accept</button>
    </div>
  </section>
</main>
</div>
</body>
</html>
